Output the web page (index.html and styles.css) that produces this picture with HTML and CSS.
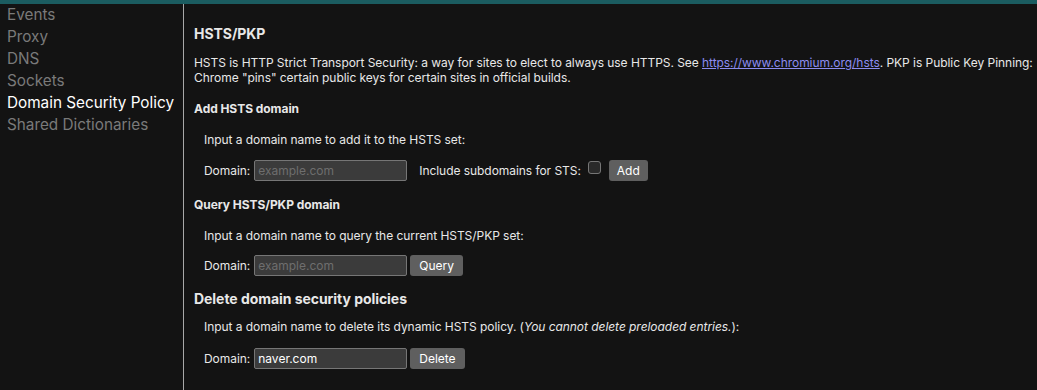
FILE: index.html
```html
<!DOCTYPE html>
<html lang="en">
<head>
    <meta charset="UTF-8">
    <meta name="viewport" content="width=device-width, initial-scale=1.0">
    <title>net-internals</title>
    <link rel="stylesheet" href="styles.css">
</head>
<body>
    <div class="topbar"></div>
    <div class="main">
        <div class="menu">
            <a>Events</a>
            <a>Proxy</a>
            <a>DNS</a>
            <a>Sockets</a>
            <a class="selected">Domain Security Policy</a>
            <a>Shared Dictionaries</a>
        </div>
        <div class="content">
            <h2>HSTS/PKP</h2>
            <p class="intro">HSTS is HTTP Strict Transport Security: a way for sites to elect to always use HTTPS. See <a href="#">https://www.chromium.org/hsts</a>. PKP is Public Key Pinning:<br>Chrome "pins" certain public keys for certain sites in official builds.</p>

            <h3>Add HSTS domain</h3>
            <div class="section">
                <p>Input a domain name to add it to the HSTS set:</p>
                <div class="row">
                    <label>Domain:</label>
                    <input type="text" placeholder="example.com">
                    <label class="sts">Include subdomains for STS:</label>
                    <input type="checkbox" class="check">
                    <button class="add">Add</button>
                </div>
            </div>

            <h3>Query HSTS/PKP domain</h3>
            <div class="section">
                <p class="query-text">Input a domain name to query the current HSTS/PKP set:</p>
                <div class="row query-row">
                    <label>Domain:</label>
                    <input type="text" placeholder="example.com">
                    <button>Query</button>
                </div>
            </div>

            <h2 class="big">Delete domain security policies</h2>
            <div class="section">
                <p class="delete-text">Input a domain name to delete its dynamic HSTS policy. (<i>You cannot delete preloaded entries.</i>):</p>
                <div class="row delete-row">
                    <label>Domain:</label>
                    <input type="text" value="naver.com">
                    <button>Delete</button>
                </div>
            </div>
        </div>
    </div>
</body>
</html>
```

FILE: styles.css
```css
html, body {
    height: 100%;
}
body {
    margin: 0;
    background-color: #131313;
    color: #e8e8e8;
    font-family: Inter, "Liberation Sans", Arial, sans-serif;
    font-size: 12px;
    overflow: hidden;
}
.topbar {
    height: 4px;
    background-color: #1b5c60;
}
.main {
    display: flex;
    height: calc(100% - 4px);
}
.menu {
    width: 183px;
    flex-shrink: 0;
    border-right: 1px solid #a8a8a8;
}
.menu a {
    display: block;
    padding-left: 7px;
    font-size: 15.3px;
    line-height: 22px;
    color: #7a7a7a;
    white-space: nowrap;
}
.menu a.selected {
    color: #ffffff;
}
.content {
    flex-grow: 1;
    padding-left: 10px;
    letter-spacing: -0.05px;
}
.content h2 {
    font-size: 14px;
    line-height: 17px;
    margin: 21px 0 0;
}
.content h2.big {
    line-height: 18px;
    margin-top: 14px;
}
.content h3 {
    font-size: 12px;
    line-height: 15px;
    margin: 16px 0 0;
}
.content p {
    margin: 0;
    line-height: 15px;
}
.content p.intro {
    margin-top: 13px;
    white-space: nowrap;
}
.content a {
    color: #8c8cf0;
}
.section {
    padding-left: 10px;
}
.section p {
    margin-top: 16px;
}
.section p.delete-text {
    margin-top: 11px;
}
.row {
    display: flex;
    align-items: center;
    height: 21px;
    margin-top: 13px;
}
.row.query-row {
    margin-top: 12px;
}
.row.delete-row {
    margin-top: 14px;
}
.row label {
    margin-right: 4px;
}
.row label.sts {
    margin-left: 12px;
    margin-right: 7px;
}
.row input[type=text] {
    width: 153px;
    height: 21px;
    box-sizing: border-box;
    margin: 0;
    background-color: #3b3b3b;
    border: 1px solid #767676;
    border-radius: 2px;
    color: #ffffff;
    font-family: inherit;
    font-size: 12px;
    padding: 0 3px;
}
.row input::placeholder {
    color: #6e6e6e;
}
.row .check {
    appearance: none;
    width: 13px;
    height: 13px;
    margin: 0 8px 6px 0;
    background-color: #2a2a2a;
    border: 1px solid #767676;
    border-radius: 3px;
}
.row button {
    height: 21px;
    margin-left: 3px;
    padding: 0 9px;
    background-color: #5f5f5f;
    color: #ffffff;
    border: none;
    border-radius: 3px;
    font-family: inherit;
    font-size: 12px;
}
.row button.add {
    margin-left: 0;
    padding: 0 8px;
}
```
